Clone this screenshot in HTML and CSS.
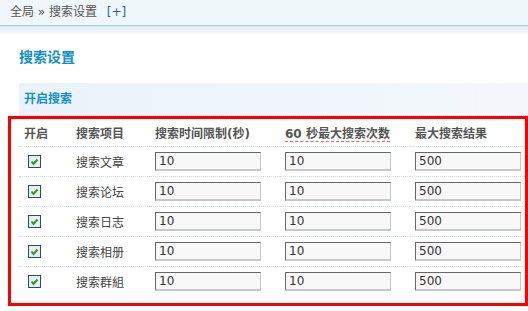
FILE: index.html
```html
<html>
<head>
  <meta charset="UTF-8">
  <title>搜索设置</title>
  <link rel="stylesheet" href="styles.css">
</head>
<body>
  <div class="nav">
    <a href="#">全局</a> &raquo; 搜索设置 <a class="add" href="#">[+]</a>
  </div>
  <div class="main">
    <h1 class="title">搜索设置</h1>
    <h3 class="band">开启搜索</h3>
    <div class="mark">
      <table class="grid">
        <colgroup>
          <col style="width:52px">
          <col style="width:79px">
          <col style="width:130px">
          <col style="width:130px">
          <col>
        </colgroup>
        <tr class="head">
          <th>开启</th>
          <th>搜索项目</th>
          <th>搜索时间限制(秒)</th>
          <th><span class="spell">60 秒最大搜索次数</span></th>
          <th>最大搜索结果</th>
        </tr>
        <tr>
          <td><span class="chk"><svg width="13" height="13" viewBox="0 0 13 13"><rect x="0.5" y="0.5" width="12" height="12" fill="#ececec" stroke="#1d4f7f"/><polyline points="3.5,6.5 5.5,9 9.5,4.5" fill="none" stroke="#22a022" stroke-width="2"/></svg></span></td>
          <td>搜索文章</td>
          <td><input class="num" type="text" value="10"></td>
          <td><input class="num" type="text" value="10"></td>
          <td><input class="num" type="text" value="500"></td>
        </tr>
        <tr>
          <td><span class="chk"><svg width="13" height="13" viewBox="0 0 13 13"><rect x="0.5" y="0.5" width="12" height="12" fill="#ececec" stroke="#1d4f7f"/><polyline points="3.5,6.5 5.5,9 9.5,4.5" fill="none" stroke="#22a022" stroke-width="2"/></svg></span></td>
          <td>搜索论坛</td>
          <td><input class="num" type="text" value="10"></td>
          <td><input class="num" type="text" value="10"></td>
          <td><input class="num" type="text" value="500"></td>
        </tr>
        <tr>
          <td><span class="chk"><svg width="13" height="13" viewBox="0 0 13 13"><rect x="0.5" y="0.5" width="12" height="12" fill="#ececec" stroke="#1d4f7f"/><polyline points="3.5,6.5 5.5,9 9.5,4.5" fill="none" stroke="#22a022" stroke-width="2"/></svg></span></td>
          <td>搜索日志</td>
          <td><input class="num" type="text" value="10"></td>
          <td><input class="num" type="text" value="10"></td>
          <td><input class="num" type="text" value="500"></td>
        </tr>
        <tr>
          <td><span class="chk"><svg width="13" height="13" viewBox="0 0 13 13"><rect x="0.5" y="0.5" width="12" height="12" fill="#ececec" stroke="#1d4f7f"/><polyline points="3.5,6.5 5.5,9 9.5,4.5" fill="none" stroke="#22a022" stroke-width="2"/></svg></span></td>
          <td>搜索相册</td>
          <td><input class="num" type="text" value="10"></td>
          <td><input class="num" type="text" value="10"></td>
          <td><input class="num" type="text" value="500"></td>
        </tr>
        <tr class="last">
          <td><span class="chk"><svg width="13" height="13" viewBox="0 0 13 13"><rect x="0.5" y="0.5" width="12" height="12" fill="#ececec" stroke="#1d4f7f"/><polyline points="3.5,6.5 5.5,9 9.5,4.5" fill="none" stroke="#22a022" stroke-width="2"/></svg></span></td>
          <td>搜索群組</td>
          <td><input class="num" type="text" value="10"></td>
          <td><input class="num" type="text" value="10"></td>
          <td><input class="num" type="text" value="500"></td>
        </tr>
      </table>
    </div>
  </div>
</body>
</html>
```

FILE: styles.css
```css
body {
  margin: 0;
  font-family: "DejaVu Sans", "Noto Sans CJK SC", sans-serif;
  font-size: 12px;
  color: #444444;
  background: #ffffff;
  overflow: hidden;
}
.nav {
  height: 25px;
  line-height: 25px;
  padding-left: 10px;
  background: #eff7fb;
  border-bottom: 1px solid #a8c9d3;
  color: #555555;
}
.nav a {
  color: #555555;
  text-decoration: none;
}
.nav .add {
  color: #2b62a0;
  margin-left: 6px;
}
.main {
  padding: 21px 0 0 19px;
  background: linear-gradient(#dcebf3, #ffffff) no-repeat;
  background-size: 100% 10px;
}
.title {
  margin: 0;
  font-size: 14px;
  line-height: 20px;
  color: #0d8fcb;
}
.band {
  margin: 16px 0 0 0;
  height: 32px;
  line-height: 32px;
  padding-left: 5px;
  font-size: 12px;
  color: #0d8fcb;
  background: linear-gradient(to right, #eaf2fa, #f4f8fc);
  border-bottom: 1px dotted #c6dfee;
}
.mark {
  margin-left: -11px;
  padding: 0 0 7px 8px;
  border: 3px solid #ff0000;
}
.grid {
  width: 100%;
  border-collapse: collapse;
  table-layout: fixed;
  font-size: 12px;
  color: #444444;
}
.grid th, .grid td {
  padding: 0 0 0 5px;
  text-align: left;
  height: 30px;
  border-bottom: 1px dotted #c6dfee;
  white-space: nowrap;
}
.grid .head th {
  height: 27px;
  font-weight: bold;
  color: #555555;
}
.grid .last td {
  border-bottom: none;
}
.spell {
  border-bottom: 1px dashed #ff5a5a;
}
.chk {
  display: block;
  width: 13px;
  height: 13px;
  margin-left: 4px;
}
.chk svg {
  display: block;
}
.num {
  box-sizing: border-box;
  width: 106px;
  height: 19px;
  margin: 0;
  padding: 0 0 0 3px;
  border: 1px solid;
  border-bottom-width: 2px;
  border-color: #666666 #c8c8c8 #c8c8c8 #666666;
  background: #f8f8f8;
  font-family: "DejaVu Sans", sans-serif;
  font-size: 12px;
  color: #333333;
  vertical-align: middle;
}
```
